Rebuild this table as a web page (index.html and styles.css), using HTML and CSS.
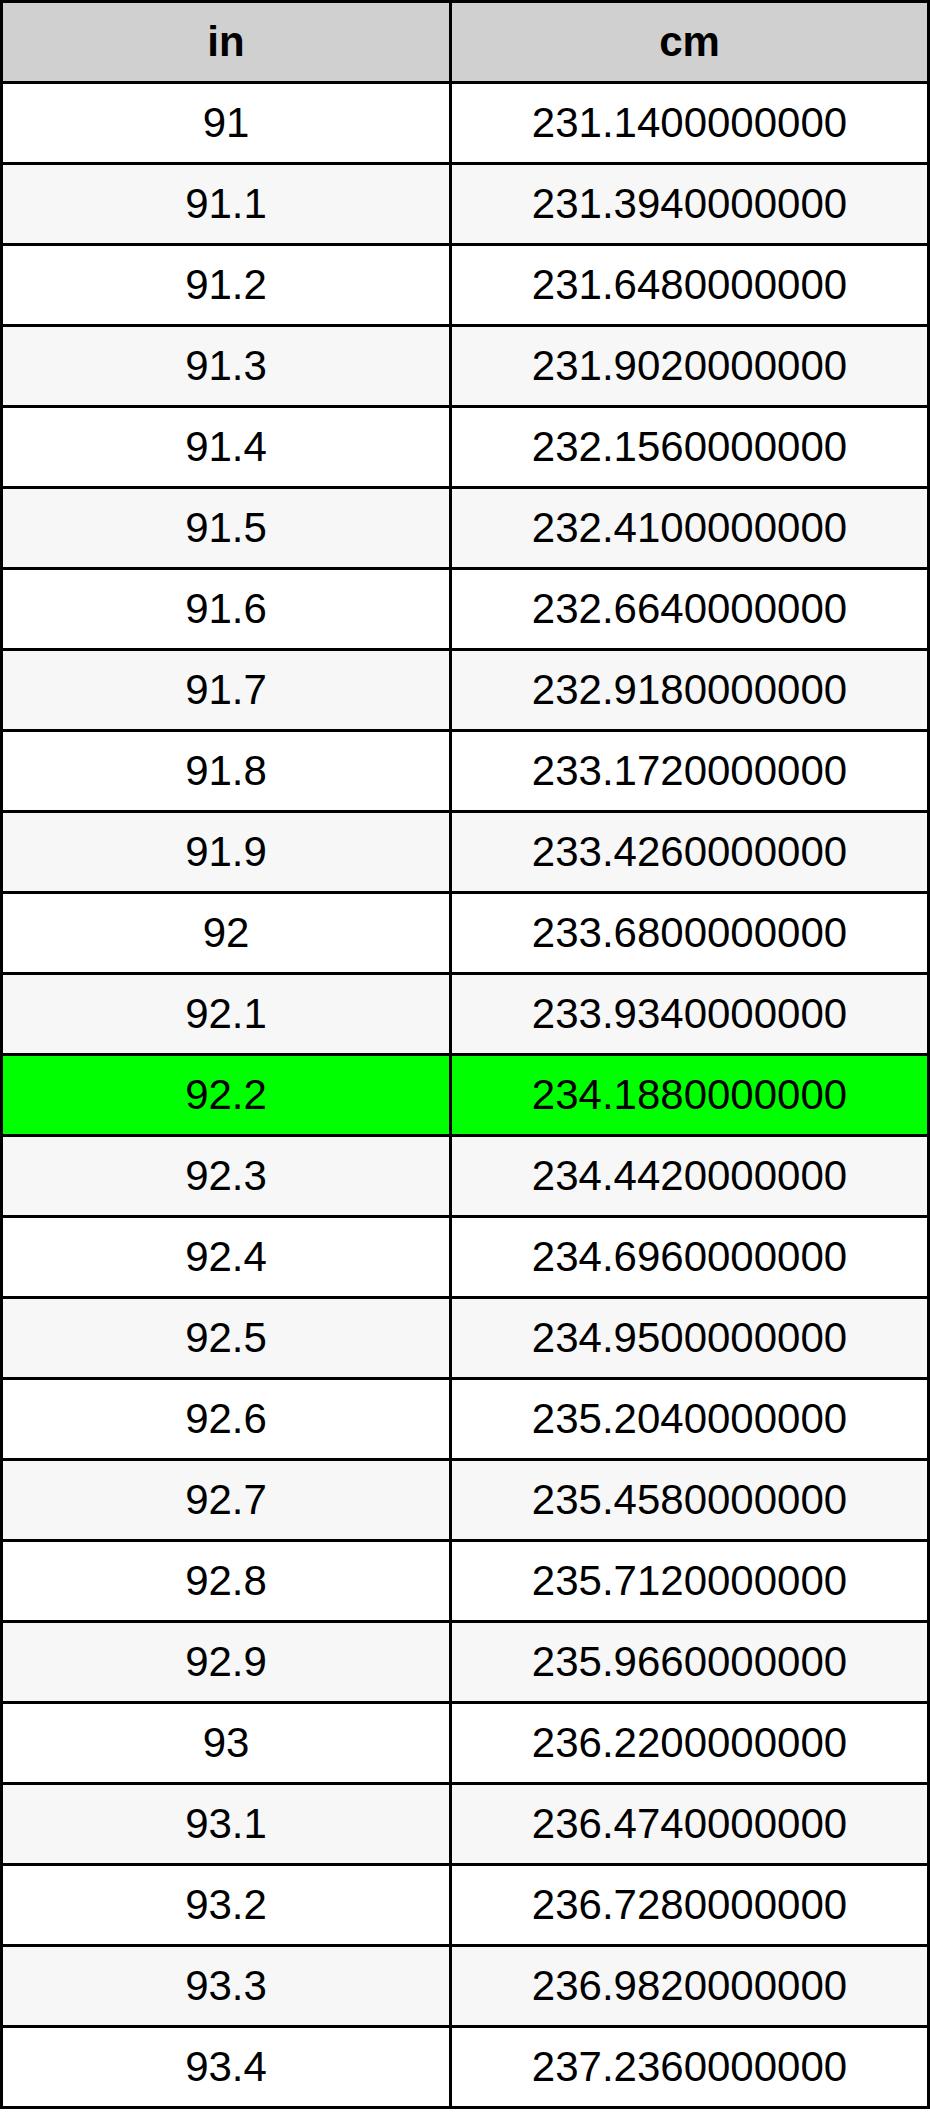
FILE: index.html
```html
<!DOCTYPE html>
<html>
<head>
<meta charset="utf-8">
<link rel="stylesheet" href="styles.css">
</head>
<body>
<div class="table">
  <div class="row head"><div class="cell">in</div><div class="cell">cm</div></div>
  <div class="row"><div class="cell">91</div><div class="cell">231.1400000000</div></div>
  <div class="row alt"><div class="cell">91.1</div><div class="cell">231.3940000000</div></div>
  <div class="row"><div class="cell">91.2</div><div class="cell">231.6480000000</div></div>
  <div class="row alt"><div class="cell">91.3</div><div class="cell">231.9020000000</div></div>
  <div class="row"><div class="cell">91.4</div><div class="cell">232.1560000000</div></div>
  <div class="row alt"><div class="cell">91.5</div><div class="cell">232.4100000000</div></div>
  <div class="row"><div class="cell">91.6</div><div class="cell">232.6640000000</div></div>
  <div class="row alt"><div class="cell">91.7</div><div class="cell">232.9180000000</div></div>
  <div class="row"><div class="cell">91.8</div><div class="cell">233.1720000000</div></div>
  <div class="row alt"><div class="cell">91.9</div><div class="cell">233.4260000000</div></div>
  <div class="row"><div class="cell">92</div><div class="cell">233.6800000000</div></div>
  <div class="row alt"><div class="cell">92.1</div><div class="cell">233.9340000000</div></div>
  <div class="row hl"><div class="cell">92.2</div><div class="cell">234.1880000000</div></div>
  <div class="row alt"><div class="cell">92.3</div><div class="cell">234.4420000000</div></div>
  <div class="row"><div class="cell">92.4</div><div class="cell">234.6960000000</div></div>
  <div class="row alt"><div class="cell">92.5</div><div class="cell">234.9500000000</div></div>
  <div class="row"><div class="cell">92.6</div><div class="cell">235.2040000000</div></div>
  <div class="row alt"><div class="cell">92.7</div><div class="cell">235.4580000000</div></div>
  <div class="row"><div class="cell">92.8</div><div class="cell">235.7120000000</div></div>
  <div class="row alt"><div class="cell">92.9</div><div class="cell">235.9660000000</div></div>
  <div class="row"><div class="cell">93</div><div class="cell">236.2200000000</div></div>
  <div class="row alt"><div class="cell">93.1</div><div class="cell">236.4740000000</div></div>
  <div class="row"><div class="cell">93.2</div><div class="cell">236.7280000000</div></div>
  <div class="row alt"><div class="cell">93.3</div><div class="cell">236.9820000000</div></div>
  <div class="row"><div class="cell">93.4</div><div class="cell">237.2360000000</div></div>
</div>
</body>
</html>
```
FILE: styles.css
```css
html, body {
  margin: 0;
  padding: 0;
  background: #ffffff;
}
body {
  font-family: "Liberation Sans", Arial, sans-serif;
  color: #000000;
}
.table {
  width: 930px;
  box-sizing: border-box;
  display: flex;
  flex-direction: column;
  gap: 3px;
  padding: 3px;
  background: #000000;
}
.row {
  display: grid;
  grid-template-columns: 446px 475px;
  gap: 3px;
  height: 78px;
}
.cell {
  display: flex;
  align-items: center;
  justify-content: center;
  background: #ffffff;
  font-size: 42px;
}
.row.alt .cell {
  background: #f7f7f7;
}
.row.head .cell {
  background: #d0d0d0;
  font-weight: bold;
}
.row.hl .cell {
  background: #00ff00;
}
```
